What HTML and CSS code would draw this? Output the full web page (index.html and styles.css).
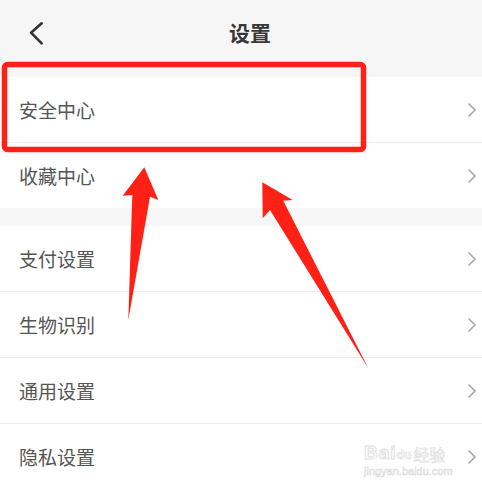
FILE: index.html
```html
<!DOCTYPE html>
<html lang="zh-CN">
<head>
<meta charset="utf-8">
<title>设置</title>
<link rel="stylesheet" href="styles.css">
</head>
<body>
<div class="screen">
  <header class="topbar">
    <svg class="back" width="20" height="30" viewBox="0 0 20 30"><path d="M13.7 3.3 L3 12.7 L13.7 23.3" fill="none" stroke="#333" stroke-width="2.6" stroke-linecap="round" stroke-linejoin="round"/></svg>
    <h1 class="title">设置</h1>
  </header>
  <section class="group">
    <div class="row"><span class="label">安全中心</span><svg class="chev" width="10" height="16" viewBox="0 0 10 16"><path d="M1.5 1.5 L8 8 L1.5 14.5" fill="none" stroke="#a8a8a8" stroke-width="1.6"/></svg></div>
    <div class="row"><span class="label">收藏中心</span><svg class="chev" width="10" height="16" viewBox="0 0 10 16"><path d="M1.5 1.5 L8 8 L1.5 14.5" fill="none" stroke="#a8a8a8" stroke-width="1.6"/></svg></div>
  </section>
  <div class="gap"></div>
  <section class="group">
    <div class="row"><span class="label">支付设置</span><svg class="chev" width="10" height="16" viewBox="0 0 10 16"><path d="M1.5 1.5 L8 8 L1.5 14.5" fill="none" stroke="#a8a8a8" stroke-width="1.6"/></svg></div>
    <div class="row"><span class="label">生物识别</span><svg class="chev" width="10" height="16" viewBox="0 0 10 16"><path d="M1.5 1.5 L8 8 L1.5 14.5" fill="none" stroke="#a8a8a8" stroke-width="1.6"/></svg></div>
    <div class="row"><span class="label">通用设置</span><svg class="chev" width="10" height="16" viewBox="0 0 10 16"><path d="M1.5 1.5 L8 8 L1.5 14.5" fill="none" stroke="#a8a8a8" stroke-width="1.6"/></svg></div>
    <div class="row"><span class="label">隐私设置</span><svg class="chev" width="10" height="16" viewBox="0 0 10 16"><path d="M1.5 1.5 L8 8 L1.5 14.5" fill="none" stroke="#a8a8a8" stroke-width="1.6"/></svg></div>
  </section>
  <div class="watermark">
    <div class="wm-main"><span class="wm-bai">Bai</span><span class="wm-paw">du</span><span class="wm-jy">经验</span></div>
    <div class="wm-sub">jingyan.baidu.com</div>
  </div>
  <svg class="annot" width="482" height="490" viewBox="0 0 482 490">
    <rect x="4.5" y="64.5" width="359" height="85" rx="3" ry="3" fill="none" stroke="#ff2115" stroke-width="5.5"/>
    <polygon points="144.3,167.3 158.3,200 150,196.7 128.3,320 132.3,195 122.7,195.7" fill="#ff2115"/>
    <polygon points="262.3,182.3 292.7,200 283.3,200.7 368.3,368.3 270,210 262.7,218.3" fill="#ff2115"/>
  </svg>
</div>
</body>
</html>
```

FILE: styles.css
```css
html, body {
  margin: 0;
  padding: 0;
  background: #ffffff;
}
.screen {
  position: relative;
  width: 482px;
  height: 490px;
  overflow: hidden;
  font-family: "Noto Sans CJK SC", "Noto Sans", sans-serif;
  background: #ffffff;
}
.topbar {
  height: 77px;
  background: #f6f6f6;
  display: flex;
  align-items: center;
  justify-content: center;
  position: relative;
}
.back {
  position: absolute;
  left: 28px;
  top: 20px;
}
.title {
  margin: -13px 0 0 18px;
  font-size: 21px;
  font-weight: 700;
  color: #383838;
  line-height: 1;
}
.group {
  background: #ffffff;
}
.row {
  height: 65px;
  display: flex;
  align-items: center;
  justify-content: space-between;
  padding: 0 5px 0 19px;
  border-bottom: 1px solid #ececec;
}
.row:last-child {
  border-bottom: none;
}
.label {
  font-size: 19px;
  color: #555555;
  line-height: 1;
}
.chev {
  display: block;
}
.gap {
  height: 18px;
  background: #f6f6f6;
}
.watermark {
  position: absolute;
  left: 364px;
  top: 443px;
  line-height: 1;
  font-family: "Liberation Sans", sans-serif;
  color: #f7f7f7;
}
.wm-main {
  display: flex;
  align-items: flex-end;
  white-space: nowrap;
}
.wm-bai {
  font-size: 19px;
  font-weight: 700;
  letter-spacing: 1px;
  color: #ffffff;
  -webkit-text-stroke: 0.9px #dedede;
}
.wm-paw {
  font-size: 12px;
  font-weight: 700;
  color: #ffffff;
  -webkit-text-stroke: 0.7px #dedede;
  margin: 0 2px 1px 0;
}
.wm-jy {
  font-family: "Noto Sans CJK SC", sans-serif;
  font-size: 16px;
  color: #ffffff;
  -webkit-text-stroke: 0.7px #e0e0e0;
}
.wm-sub {
  font-size: 11px;
  margin-top: 4px;
  color: #ffffff;
  -webkit-text-stroke: 0.6px #dadada;
}
.annot {
  position: absolute;
  left: 0;
  top: 0;
  pointer-events: none;
}
```
